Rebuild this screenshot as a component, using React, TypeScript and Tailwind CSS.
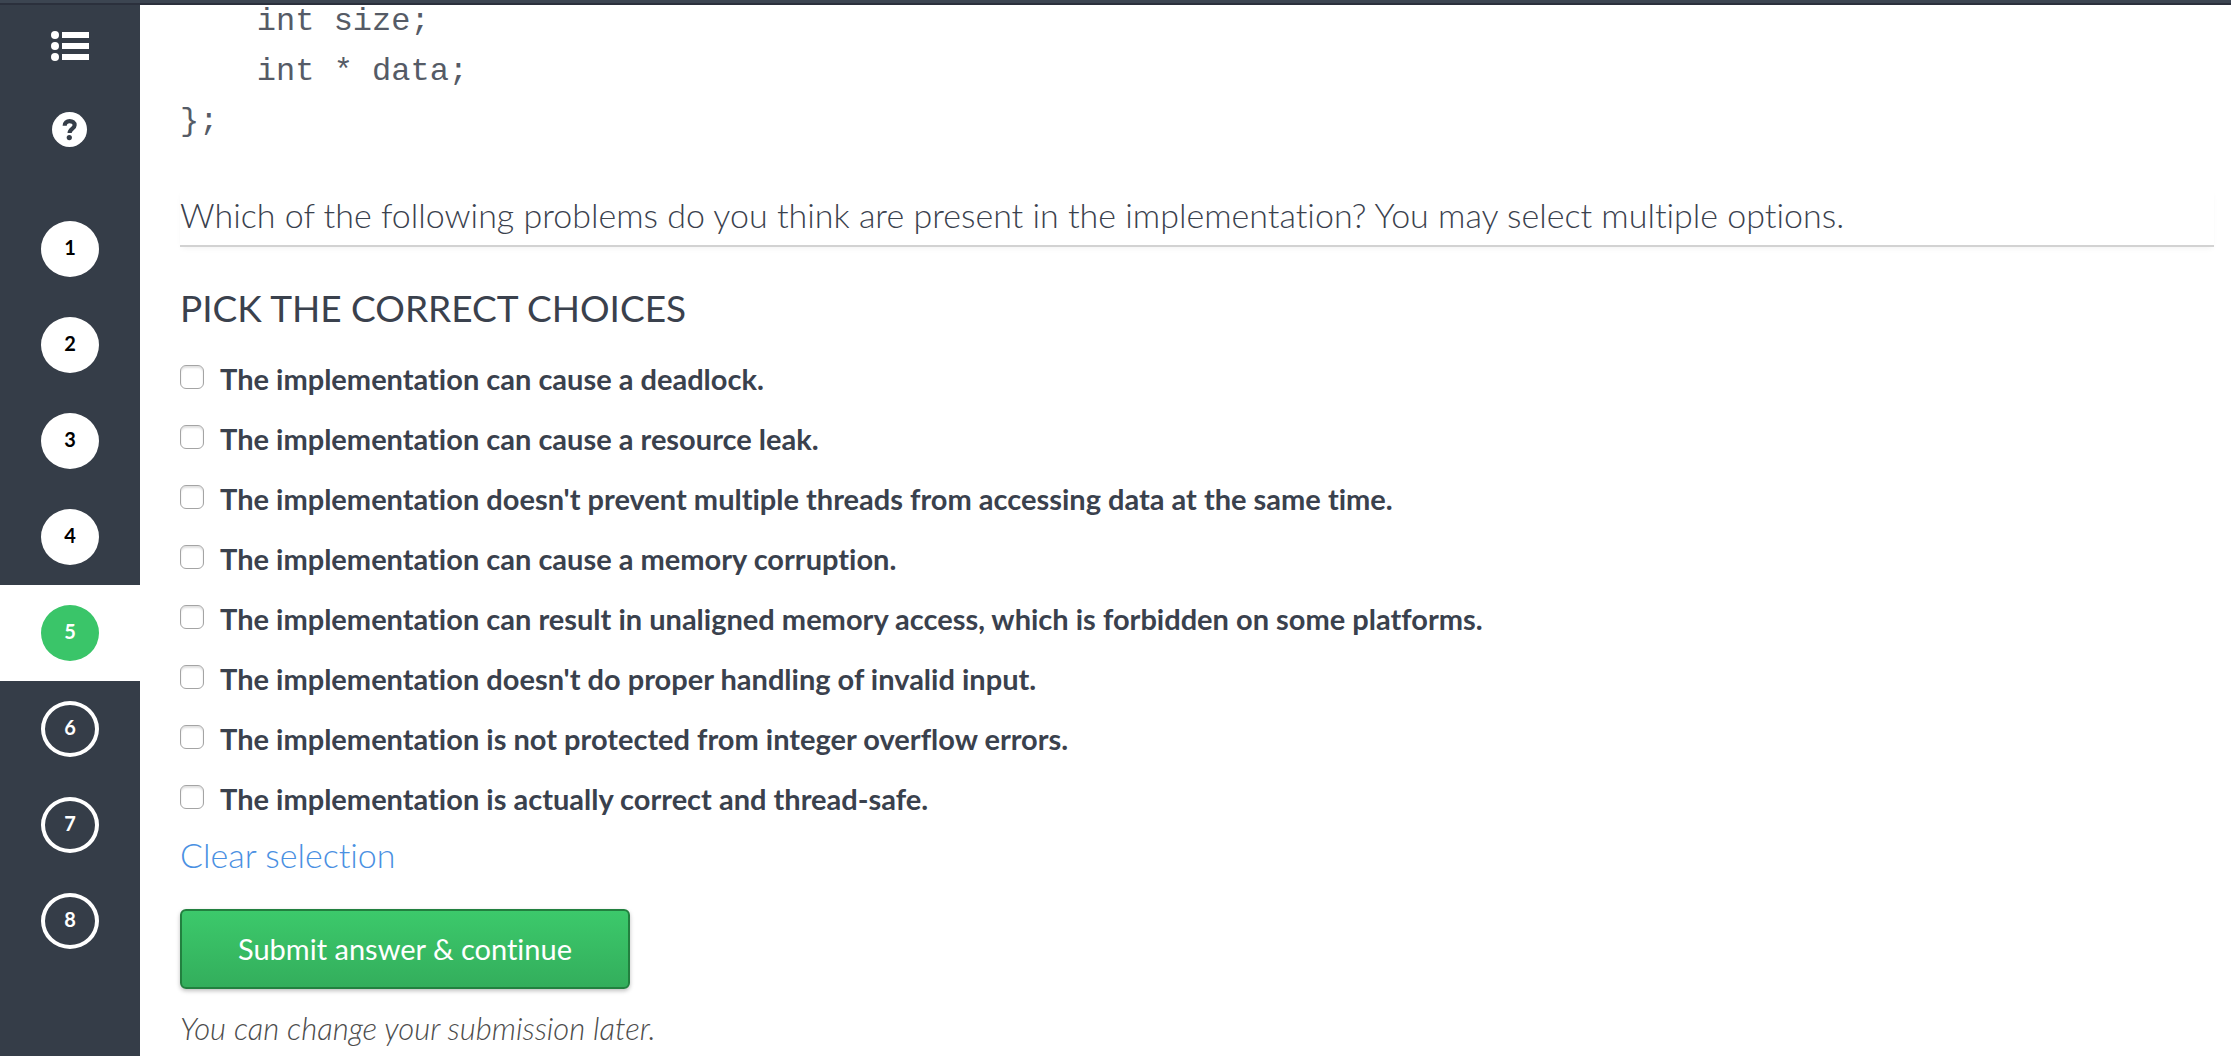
import { useState } from "react";

const options = [
  "The implementation can cause a deadlock.",
  "The implementation can cause a resource leak.",
  "The implementation doesn't prevent multiple threads from accessing data at the same time.",
  "The implementation can cause a memory corruption.",
  "The implementation can result in unaligned memory access, which is forbidden on some platforms.",
  "The implementation doesn't do proper handling of invalid input.",
  "The implementation is not protected from integer overflow errors.",
  "The implementation is actually correct and thread-safe.",
];

const questions = [1, 2, 3, 4, 5, 6, 7, 8];
const current = 5;

function ListIcon() {
  return (
    <svg width="38" height="30" viewBox="0 0 38 30" fill="#fff" aria-hidden="true">
      <circle cx="4" cy="4" r="4" />
      <circle cx="4" cy="15" r="4" />
      <circle cx="4" cy="26" r="4" />
      <rect x="11" y="1" width="27" height="6" />
      <rect x="11" y="12" width="27" height="6" />
      <rect x="11" y="23" width="27" height="6" />
    </svg>
  );
}

function HelpIcon() {
  return (
    <svg width="36" height="35" viewBox="0 0 36 35" aria-hidden="true">
      <circle cx="17.5" cy="17.5" r="17.5" fill="#fff" />
      <path
        d="M12.7 13.8 C12.7 10.6 14.8 9.2 17.6 9.2 C20.6 9.2 22.6 10.7 22.6 13.2 C22.6 16.6 17.6 16.6 17.6 21"
        fill="none"
        stroke="#353d48"
        strokeWidth="4.2"
      />
      <circle cx="17.3" cy="25.6" r="2.6" fill="#353d48" />
    </svg>
  );
}

function Step({ n }: { n: number }) {
  const row = n === current ? "bg-white" : "";
  const look =
    n === current
      ? "border-[#3ac569] bg-[#3ac569] text-white"
      : n < current
        ? "border-white bg-white text-black"
        : "border-white text-white";
  return (
    <li className={row}>
      <a
        href={`#question-${n}`}
        aria-current={n === current ? "step" : undefined}
        className="flex h-24 items-center justify-center"
      >
        <span
          className={`flex h-14 w-[58px] items-center justify-center rounded-[50%] border-4 pb-1 text-xl leading-none font-bold ${look}`}
        >
          {n}
        </span>
      </a>
    </li>
  );
}

export default function App() {
  const [picked, setPicked] = useState<number[]>([]);
  const toggle = (i: number) =>
    setPicked((p) => (p.includes(i) ? p.filter((x) => x !== i) : [...p, i]));

  return (
    <div className="flex h-screen flex-col overflow-hidden bg-white font-['Lato',sans-serif] text-[#3a414d] [font-variant-ligatures:no-common-ligatures]">
      <header className="h-[5px] shrink-0 border-b-2 border-[#2b303c] bg-[#3c4551]" />
      <div className="flex min-h-0 flex-1">
        <nav aria-label="Questions" className="w-[140px] shrink-0 bg-[#353d48]">
          <div className="flex flex-col items-center gap-[51px] pt-[26px]">
            <button type="button" aria-label="Question list">
              <ListIcon />
            </button>
            <button type="button" aria-label="Help">
              <HelpIcon />
            </button>
          </div>
          <ol className="mt-[54px]">
            {questions.map((n) => (
              <Step key={n} n={n} />
            ))}
          </ol>
        </nav>

        <main className="min-w-0 flex-1 pr-[17px] pl-10">
          <pre className="-mt-2 font-['Liberation_Mono',monospace] text-[32px] leading-[50px] text-[#555b66]">
            {"    int size;\n    int * data;\n};"}
          </pre>

          <p className="mt-[43px] border-b-2 border-[#d2d2d2] pb-[5px] text-[34px] leading-[50px] font-light shadow-[0_3px_6px_-2px_rgba(0,0,0,0.06)]">
            Which of the following problems do you think are present in the
            implementation? You may select multiple options.
          </p>

          <form onSubmit={(e) => e.preventDefault()}>
            <fieldset>
              <legend className="pt-9 text-[37px] leading-[50px]">
                PICK THE CORRECT CHOICES
              </legend>
              <div className="pt-4">
                {options.map((text, i) => (
                  <label
                    key={text}
                    className="flex h-[60px] items-center gap-4 text-[29px] leading-10 font-bold"
                  >
                    <input
                      type="checkbox"
                      checked={picked.includes(i)}
                      onChange={() => toggle(i)}
                      className="mb-1 size-6 shrink-0 appearance-none rounded-[6px] border border-[#a4a4a4] bg-white shadow-[inset_0_2px_2px_rgba(0,0,0,0.12)] checked:bg-[#3ac569]"
                    />
                    <span>{text}</span>
                  </label>
                ))}
              </div>
            </fieldset>
            <button
              type="button"
              onClick={() => setPicked([])}
              className="mt-px block text-[34px] leading-[50px] font-light text-[#4a90e2]"
            >
              Clear selection
            </button>
            <button
              type="submit"
              className="mt-[29px] block h-20 rounded-[6px] border-2 border-[#22803f] bg-linear-to-b from-[#3cc96b] to-[#33ae5c] px-14 text-[29px] text-white shadow-[0_2px_4px_rgba(0,0,0,0.25)]"
            >
              Submit answer &amp; continue
            </button>
            <p className="mt-[14px] text-[31px] leading-[50px] font-light text-[#4c4c4c] italic">
              You can change your submission later.
            </p>
          </form>
        </main>
      </div>
    </div>
  );
}
